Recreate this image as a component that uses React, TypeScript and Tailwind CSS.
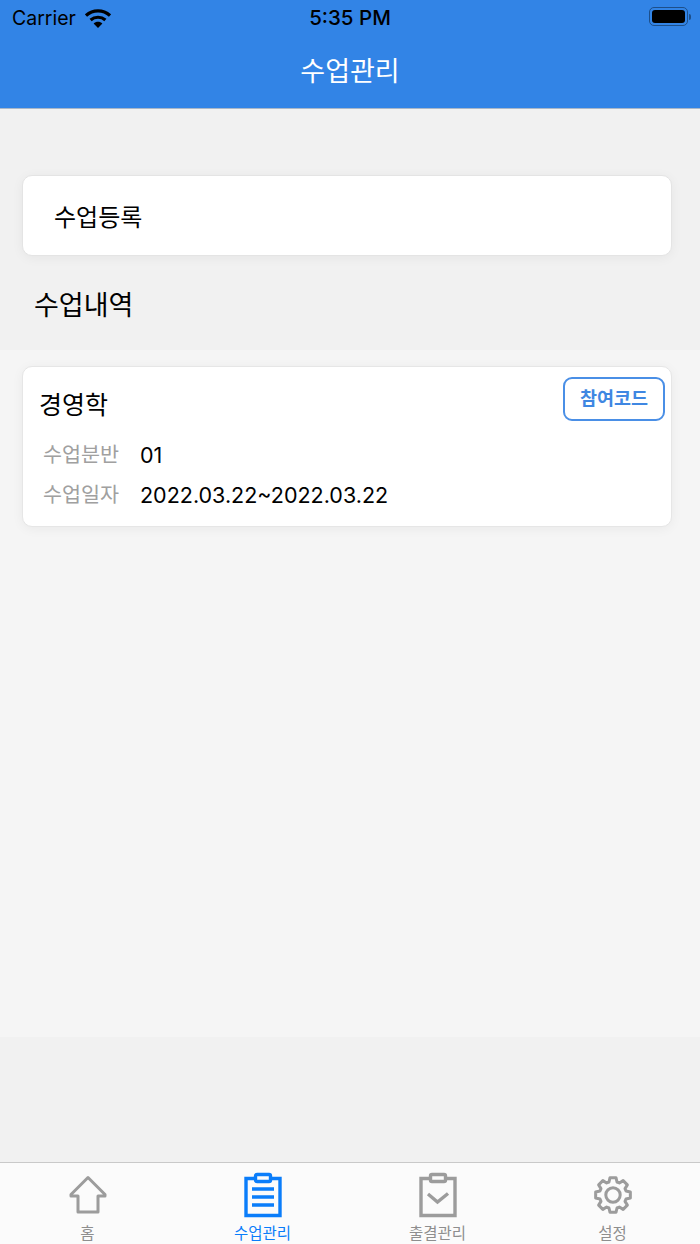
import React from "react";

const KR = { fontFamily: '"Inter", "Noto Sans CJK KR", sans-serif' };

function Wifi() {
  return (
    <svg width="26" height="19" viewBox="0 0 26 19" className="text-black">
      <path d="M1 6.6 C7.8 .4 18.2 .4 25 6.6" fill="none" stroke="currentColor" strokeWidth="3.2" />
      <path d="M5.6 11 C9.9 7.3 16.1 7.3 20.4 11" fill="none" stroke="currentColor" strokeWidth="3.2" />
      <path d="M13 19 L8.6 14.4 C11 12.3 15 12.3 17.4 14.4 Z" fill="currentColor" />
    </svg>
  );
}

function Home() {
  return (
    <svg width="40" height="40" viewBox="0 0 40 40" fill="none" stroke="#9c9c9c" strokeWidth="3">
      <path d="M20 2.5 L37 19.5 V21 H30 V37 H10 V21 H3 V19.5 Z" strokeLinejoin="round" />
    </svg>
  );
}

function ClassIcon() {
  return (
    <svg width="40" height="46" viewBox="0 0 40 46" fill="none" stroke="#0a7dfa" strokeWidth="3.4">
      <path d="M12 6.5 H3 V43.5 H37 V6.5 H28" />
      <rect x="12.5" y="2.5" width="15" height="7" rx="1.5" />
      <path d="M9 17 H31 M9 25 H31 M9 33 H31" />
    </svg>
  );
}

function AttendIcon() {
  return (
    <svg width="40" height="46" viewBox="0 0 40 46" fill="none" stroke="#9c9c9c" strokeWidth="3.4">
      <path d="M12 6.5 H3 V43.5 H37 V6.5 H28" />
      <rect x="12.5" y="2.5" width="15" height="7" rx="1.5" />
      <path d="M10 22 L19.5 30 L30 21.5" />
    </svg>
  );
}

const gearPoints = Array.from({ length: 8 }, (_, i) => {
  const a = (i * Math.PI) / 4;
  const pt = (r: number, d: number) => {
    const x = 20 + r * Math.sin(a + d);
    const y = 20 - r * Math.cos(a + d);
    return `${x.toFixed(2)},${y.toFixed(2)}`;
  };
  return [pt(13.6, -0.3), pt(17.6, -0.17), pt(17.6, 0.17), pt(13.6, 0.3)].join(" ");
}).join(" ");

function Gear() {
  return (
    <svg width="40" height="40" viewBox="0 0 40 40" fill="none" stroke="#9c9c9c" strokeWidth="3" strokeLinejoin="round">
      <polygon points={gearPoints} />
      <circle cx="20" cy="20" r="7.2" />
    </svg>
  );
}

function Tab({ icon, label, active }: { icon: React.ReactNode; label: string; active?: boolean }) {
  return (
    <div className="flex w-[175px] flex-col items-center">
      <div className="flex h-[50px] items-center justify-center">{icon}</div>
      <span className={`mt-[6px] text-[15.5px] leading-[20px] ${active ? "text-[#0a7dfa]" : "text-[#8e8e8e]"}`}>{label}</span>
    </div>
  );
}

export default function App() {
  return (
    <div className="flex h-[1244px] w-[700px] flex-col overflow-hidden bg-[#f1f1f1]" style={KR}>
      <header className="h-[109px] shrink-0 border-b border-[#a9b7c8] bg-[#3284e6]">
        <div className="relative flex h-[36px] items-center justify-center">
          <div className="absolute left-[12px] top-[6px] flex items-center gap-[9px]">
            <span className="text-[19.5px] leading-[24px] text-black">Carrier</span>
            <Wifi />
          </div>
          <span className="text-[20.5px] font-medium leading-[24px] text-black">5:35 PM</span>
          <div className="absolute right-[9px] top-[7px] flex items-center gap-[1px]">
            <div className="h-[19px] w-[39px] rounded-[5px] border border-[#1d4f8a] p-[2px]">
              <div className="h-full w-full rounded-[3px] bg-black" />
            </div>
            <div className="h-[6px] w-[2px] rounded-r-sm bg-[#1d4f8a]" />
          </div>
        </div>
        <h1 className="mt-[11px] text-center text-[27px] leading-[50px] text-white">수업관리</h1>
      </header>

      <section className="h-[241px] shrink-0 pl-[22px] pr-[28px] pt-[66px]">
        <div className="flex h-[81px] items-center rounded-[10px] border border-[#e4e4e4] bg-white pl-[31px] pt-[4px] text-[24px] text-black shadow-[0_2px_12px_rgba(0,0,0,0.05)]">
          수업등록
        </div>
        <h2 className="mt-[30px] pl-[12px] text-[27px] leading-[40px] text-black">수업내역</h2>
      </section>

      <section className="h-[687px] shrink-0 bg-[#f5f5f5] pl-[22px] pr-[28px] pt-[16px]">
        <div className="relative h-[161px] rounded-[10px] border border-[#e6e6e6] bg-white pl-[16px] shadow-[0_2px_12px_rgba(0,0,0,0.05)]">
          <button className="absolute right-[6px] top-[10px] flex h-[44px] w-[102px] items-center justify-center rounded-[9px] border-2 border-[#4a8fe6] text-[18.5px] font-bold text-[#3f87e2]">
            참여코드
          </button>
          <div className="pt-[18px] text-[25px] leading-[40px] text-black">경영학</div>
          <div className="mt-[10px] flex items-center pl-[4px] text-[20.7px] leading-[40px]">
            <span className="w-[97px] text-[#a0a0a0]">수업분반</span>
            <span className="text-[21.5px] text-black">01</span>
          </div>
          <div className="flex items-center pl-[4px] text-[20.7px] leading-[40px]">
            <span className="w-[97px] text-[#a0a0a0]">수업일자</span>
            <span className="text-[21.5px] text-black">2022.03.22~2022.03.22</span>
          </div>
        </div>
      </section>

      <div className="h-[125px] shrink-0" />

      <nav className="flex h-[82px] shrink-0 border-t border-[#c9c9c9] bg-[#fbfbfb] pt-[9px]">
        <Tab icon={<Home />} label="홈" />
        <Tab icon={<ClassIcon />} label="수업관리" active />
        <Tab icon={<AttendIcon />} label="출결관리" />
        <Tab icon={<Gear />} label="설정" />
      </nav>
    </div>
  );
}
